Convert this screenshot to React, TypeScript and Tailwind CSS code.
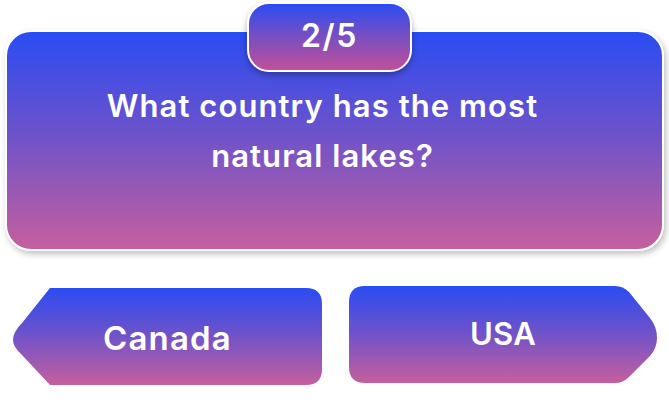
import React from 'react';

const grad = 'bg-[linear-gradient(180deg,#2a4cf3_0%,#6a52cc_45%,#c65f9d_100%)]';

function AnswerButton({ label, side }: { label: string; side: 'left' | 'right' }) {
  const shape =
    side === 'left'
      ? "w-[309px] mt-[2px] pt-[4px] text-[33px] tracking-[0.035em] [clip-path:path('M37,0_H293_Q309,0_309,16_V81_Q309,97_293,97_H37_L9,67_Q0,59_0,52_Q0,44_9,35_Z')]"
      : "w-[308px] text-[31px] tracking-[0.01em] [clip-path:path('M16,0_H266_Q274,0_280,6_L301,32_Q308,41_308,52_Q308,62_301,70_L280,91_Q274,97_266,97_H16_Q0,97_0,81_V16_Q0,0_16,0_Z')]";
  return (
    <button className={`h-[97px] flex items-center justify-center text-white font-semibold ${grad} ${shape}`}>
      {label}
    </button>
  );
}

export default function App() {
  return (
    <div className="relative w-[669px] h-[411px] bg-white font-['Inter',sans-serif]">
      <div className="pt-[30px] pl-[5px]">
        <div
          className={`w-[659px] h-[221px] rounded-[26px] border-2 border-white shadow-[2px_3px_6px_rgba(0,0,0,0.25)] ${grad} pt-[49px] pr-[24px] text-center text-white font-semibold text-[31px] leading-[50px] tracking-[0.035em]`}
        >
          <p>What country has the most</p>
          <p>natural lakes?</p>
        </div>
      </div>

      <div
        className={`absolute left-[247px] top-[2px] w-[165px] h-[70px] rounded-[22px] border-2 border-white shadow-[0_3px_6px_rgba(0,0,0,0.3)] bg-[linear-gradient(180deg,#2a4cf3_0%,#7a4fc0_50%,#c0509a_100%)] flex items-center justify-center pb-[2px] text-white font-semibold text-[32px] tracking-[0.05em]`}
      >
        2/5
      </div>

      <div className="flex items-start gap-[27px] pl-[13px] pt-[35px]">
        <AnswerButton label="Canada" side="left" />
        <AnswerButton label="USA" side="right" />
      </div>
    </div>
  );
}
